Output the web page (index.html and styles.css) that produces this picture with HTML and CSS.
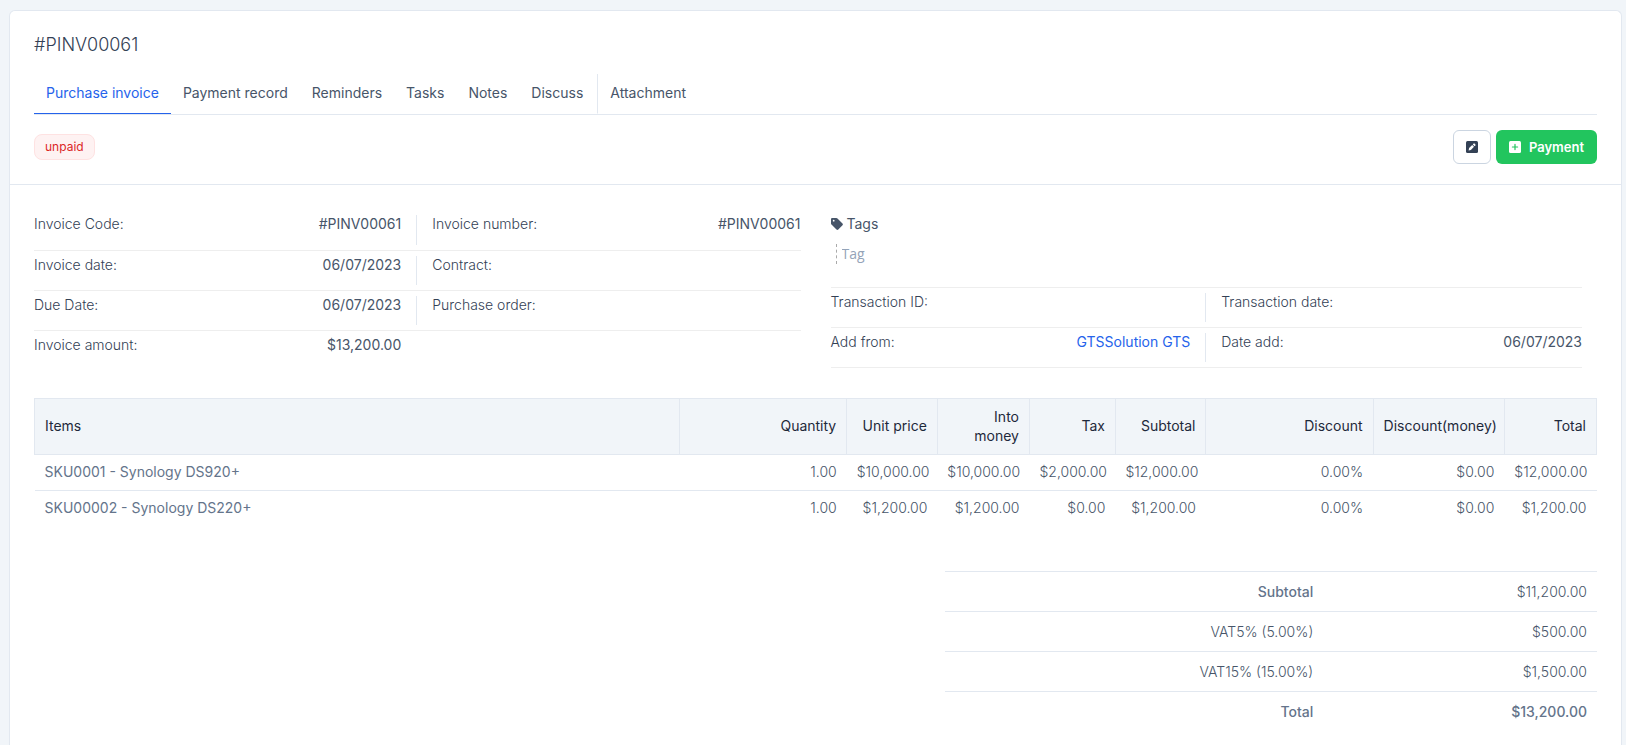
FILE: index.html
```html
<!DOCTYPE html>
<html lang="en">
<head>
<meta charset="utf-8">
<meta name="viewport" content="width=device-width, initial-scale=1">
<title>#PINV00061</title>
<link rel="stylesheet" href="styles.css">
</head>
<body>
<main class="panel">
  <header class="panel-head">
    <h1 class="title">#PINV00061</h1>
    <nav class="tabs">
      <a class="tab tab-active" href="#invoice">Purchase invoice</a>
      <a class="tab" href="#payments">Payment record</a>
      <a class="tab" href="#reminders">Reminders</a>
      <a class="tab" href="#tasks">Tasks</a>
      <a class="tab" href="#notes">Notes</a>
      <a class="tab" href="#discuss">Discuss</a>
      <a class="tab tab-separated" href="#attachment">Attachment</a>
    </nav>
    <div class="toolbar">
      <span class="badge">unpaid</span>
      <div class="actions">
        <button class="btn btn-default" type="button" aria-label="Edit">
          <svg class="icon" viewBox="0 0 12 12" aria-hidden="true"><rect width="12" height="12" rx="1.5" fill="currentColor"/><path d="M2.6 9.4l.5-2.3 3.1-3.1 1.8 1.8-3.1 3.1zM6.8 3.4l.8-.8q.5-.4 1 0l.8.8q.4.5 0 1l-.8.8z" fill="#fff"/></svg>
        </button>
        <button class="btn btn-success" type="button">
          <svg class="icon" viewBox="0 0 12 12" aria-hidden="true"><rect width="12" height="12" rx="1.5" fill="currentColor"/><path d="M6 3.4v5.2M3.4 6h5.2" stroke="#22c55e" stroke-width="1.2" stroke-linecap="round"/></svg>
          Payment
        </button>
      </div>
    </div>
  </header>

  <section class="panel-body" id="invoice">
    <div class="details">
      <dl class="fields">
        <div class="row row-first">
          <div class="field"><dt>Invoice Code:</dt><dd>#PINV00061</dd></div>
          <div class="field"><dt>Invoice number:</dt><dd>#PINV00061</dd></div>
        </div>
        <div class="row">
          <div class="field"><dt>Invoice date:</dt><dd>06/07/2023</dd></div>
          <div class="field"><dt>Contract:</dt><dd></dd></div>
        </div>
        <div class="row">
          <div class="field"><dt>Due Date:</dt><dd>06/07/2023</dd></div>
          <div class="field"><dt>Purchase order:</dt><dd></dd></div>
        </div>
        <div class="row row-last">
          <div class="field field-plain"><dt>Invoice amount:</dt><dd>$13,200.00</dd></div>
        </div>
      </dl>
      <div class="side">
        <div class="tags">
          <label class="tags-label" for="tag">
            <svg class="icon" viewBox="0 0 12 12" aria-hidden="true"><path d="M0 1.1Q0 0 1.1 0h4.3q.6 0 1.1.5l5 4.9q.8.9 0 1.8l-4.2 4.3q-.9.8-1.8 0L.5 6.600Q0 6.100 0 5.400z" fill="currentColor"/><circle cx="2.700" cy="2.700" r=".9" fill="#fff"/></svg>
            Tags
          </label>
          <input class="tag-input" id="tag" type="text" placeholder="Tag">
        </div>
        <dl class="fields fields-top">
          <div class="row">
            <div class="field"><dt>Transaction ID:</dt><dd></dd></div>
            <div class="field"><dt>Transaction date:</dt><dd></dd></div>
          </div>
          <div class="row">
            <div class="field"><dt>Add from:</dt><dd><a class="link" href="#staff">GTSSolution GTS</a></dd></div>
            <div class="field"><dt>Date add:</dt><dd>06/07/2023</dd></div>
          </div>
        </dl>
      </div>
    </div>

    <table class="items">
      <colgroup>
        <col class="c-items"><col class="c-wide"><col class="c-money"><col class="c-into"><col class="c-tax"><col class="c-money"><col class="c-wide"><col class="c-discount"><col class="c-into">
      </colgroup>
      <thead>
        <tr><th>Items</th><th>Quantity</th><th>Unit price</th><th>Into money</th><th>Tax</th><th>Subtotal</th><th>Discount</th><th>Discount(money)</th><th>Total</th></tr>
      </thead>
      <tbody>
        <tr><td>SKU0001 - Synology DS920+</td><td>1.00</td><td>$10,000.00</td><td>$10,000.00</td><td>$2,000.00</td><td>$12,000.00</td><td>0.00%</td><td>$0.00</td><td>$12,000.00</td></tr>
        <tr><td>SKU00002 - Synology DS220+</td><td>1.00</td><td>$1,200.00</td><td>$1,200.00</td><td>$0.00</td><td>$1,200.00</td><td>0.00%</td><td>$0.00</td><td>$1,200.00</td></tr>
      </tbody>
    </table>

    <table class="totals">
      <tbody>
        <tr><th class="strong" scope="row">Subtotal</th><td>$11,200.00</td></tr>
        <tr><th scope="row">VAT5% (5.00%)</th><td>$500.00</td></tr>
        <tr><th scope="row">VAT15% (15.00%)</th><td>$1,500.00</td></tr>
        <tr><th class="strong" scope="row">Total</th><td class="strong">$13,200.00</td></tr>
      </tbody>
    </table>
  </section>
</main>
</body>
</html>
```
FILE: styles.css
```css
* { box-sizing: border-box; }

body {
  margin: 0;
  padding: 10px 4px 0 9px;
  background: #f1f5f9;
  color: #475569;
  font: 400 14px/20px Inter, "Liberation Sans", sans-serif;
}

.panel {
  min-height: calc(100vh - 10px);
  background: #fff;
  border: 1px solid #e2e8f0;
  border-bottom: 0;
  border-radius: 6px 6px 0 0;
}

.panel-head {
  padding: 24px 24px 20px;
  border-bottom: 1px solid #e2e8f0;
}

.title {
  margin: 0 0 19px;
  color: #334155;
  font-size: 18px;
  font-weight: 300;
  line-height: 20px;
}

.tabs {
  display: flex;
  border-bottom: 1px solid #e2e8f0;
}

.tab {
  padding: 9px 12px 10px;
  border-bottom: 1px solid transparent;
  color: #475569;
  text-decoration: none;
}

.tab-active {
  color: #2563eb;
  border-bottom-color: #2563eb;
}

.tab-separated {
  margin-left: 2px;
  border-left: 1px solid #e2e8f0;
}

.toolbar {
  display: flex;
  align-items: center;
  justify-content: space-between;
  padding-top: 15px;
}

.badge {
  padding: 4px 10px;
  border: 1px solid #fee2e2;
  border-radius: 8px;
  background: #fef2f2;
  color: #dc2626;
  font-size: 12px;
  line-height: 16px;
}

.actions {
  display: flex;
  gap: 5px;
}

.btn {
  display: flex;
  align-items: center;
  gap: 8px;
  height: 34px;
  padding: 0 12px;
  border: 1px solid transparent;
  border-radius: 6px;
  font: 600 13px/20px Inter, "Liberation Sans", sans-serif;
  cursor: pointer;
}

.btn-default {
  background: #fff;
  border-color: #cbd5e1;
  color: #334155;
}

.btn-success {
  background: #22c55e;
  color: #fff;
}

.icon {
  width: 12px;
  height: 12px;
  flex: none;
}

.panel-body { padding: 25px 24px 20px; }

.details {
  display: grid;
  grid-template-columns: 1fr 1fr;
  gap: 30px;
}

.fields {
  margin: 0;
  line-height: 18px;
}

.row {
  display: grid;
  grid-template-columns: 1fr 1fr;
  min-height: 40px;
  padding: 5px 0;
  border-bottom: 1px solid #eee;
}

.row-first { min-height: 41px; }

.row-last { border-bottom: 0; }

.fields-top { border-top: 1px solid #eee; }

.field {
  display: flex;
  justify-content: space-between;
  padding-left: 15px;
}

.field:first-child {
  padding: 0 15px 0 0;
  border-right: 1px solid #e2e8f0;
}

.row .field-plain { border-right-color: transparent; }

dt {
  color: #334155;
  font-weight: 300;
}

dd { margin: 0; }

.link {
  color: #2563eb;
  text-decoration: none;
}

.side { padding-right: 15px; }

.tags {
  padding: 5px 0 23px;
}

.tags-label {
  display: flex;
  align-items: center;
  gap: 4px;
  margin-bottom: 11px;
  line-height: 18px;
}

.tag-input {
  display: block;
  width: 100px;
  height: 20px;
  margin-left: 5px;
  padding: 0 0 0 5px;
  border: 0;
  border-left: 1px dashed #aaa;
  background: none;
  color: #475569;
  font: 400 14px/20px "Open Sans", sans-serif;
}

.tag-input::placeholder { color: #94a3b8; }

table {
  border-collapse: collapse;
  table-layout: fixed;
}

.items {
  width: 100%;
  margin-top: 27px;
}

.c-items { width: 41.3%; }
.c-wide { width: 10.7%; }
.c-money { width: 5.8%; }
.c-into { width: 5.9%; }
.c-tax { width: 5.5%; }
.c-discount { width: 8.4%; }

.items th,
.items td {
  padding: 7px 10px 9px;
  line-height: 19px;
  text-align: right;
}

.items th {
  height: 56px;
  border: 1px solid #e2e8f0;
  background: #f1f5f9;
  color: #1e293b;
  font-weight: 400;
}

.items td,
.totals th,
.totals td {
  color: #475569;
  font-weight: 300;
}

.items th:first-child,
.items td:first-child {
  font-weight: 400;
  text-align: left;
}

.items td:first-child { color: #64748b; }

.items tbody tr + tr { border-top: 1px solid #e2e8f0; }

.totals {
  width: 41.7%;
  margin: 45px 0 0 auto;
}

.totals tr { border-top: 1px solid #e2e8f0; }

.totals th,
.totals td {
  padding: 10px 10px 9px;
  text-align: right;
}

.totals th { width: 58%; }

.totals .strong {
  color: #64748b;
  font-weight: 500;
}
```
